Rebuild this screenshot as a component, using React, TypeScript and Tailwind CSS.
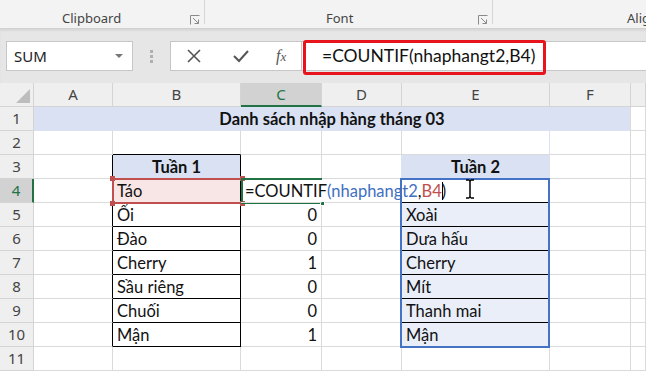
import React from "react";

const CELL_FONT = "font-['Lato','Liberation_Sans',sans-serif]";
const UI_FONT = "font-['Noto_Sans','Liberation_Sans',sans-serif]";

const GRID = "grid grid-cols-[34px_79px_128px_81px_80px_148px_81px_1fr]";

function Launcher() {
  return (
    <svg width="10" height="10" viewBox="0 0 10 10" className="text-[#8a8a8a]">
      <path d="M0.5 9.5V0.5H9.5" fill="none" stroke="currentColor" />
      <path d="M3 3L8.5 8.5M8.5 4.5V8.5H4.5" fill="none" stroke="currentColor" />
    </svg>
  );
}

function RowHead({ n, active }: { n: number; active?: boolean }) {
  return (
    <div
      className={`h-6 flex items-center justify-center border-b border-r border-[#d4d4d4] text-[15px] ${UI_FONT} ${
        active
          ? "bg-[#d2d2d2] text-[#217346] border-r-2 border-r-[#217346]"
          : "bg-[#efefef] text-[#444]"
      }`}
    >
      {n}
    </div>
  );
}

function Cell({
  children,
  className = "",
}: {
  children?: React.ReactNode;
  className?: string;
}) {
  return (
    <div
      className={`h-6 flex items-end pb-[1px] px-[4px] text-[16.5px] leading-5 text-[#111] border-b border-r border-[#dadada] whitespace-nowrap ${className}`}
    >
      {children}
    </div>
  );
}

function Handle({ className }: { className: string }) {
  return <div className={`absolute w-[5px] h-[5px] ${className}`} />;
}

export default function App() {
  const tuan1 = ["Ổi", "Đào", "Cherry", "Sầu riêng", "Chuối", "Mận"];
  const counts = ["0", "0", "1", "0", "0", "1"];
  const tuan2 = ["Xoài", "Dưa hấu", "Cherry", "Mít", "Thanh mai", "Mận"];

  return (
    <div className={`w-[646px] h-[373px] overflow-hidden bg-white ${CELL_FONT}`}>
      {/* ribbon group labels */}
      <div className={`h-[28px] bg-[#f3f3f3] flex text-[13px] text-[#444] ${UI_FONT}`}>
        <div className="w-[205px] shrink-0 flex items-start pt-[10px] border-r border-[#d6d6d6] mb-[4px]">
          <span className="ml-[62px] leading-4">Clipboard</span>
          <span className="ml-auto mr-[4px] mt-[5px]">
            <Launcher />
          </span>
        </div>
        <div className="w-[288px] shrink-0 flex items-start pt-[10px] border-r border-[#d6d6d6] mb-[4px]">
          <span className="ml-[121px] leading-4">Font</span>
          <span className="ml-auto mr-[4px] mt-[5px]">
            <Launcher />
          </span>
        </div>
        <div className="flex-1 min-w-0 overflow-hidden flex items-start pt-[10px]">
          <span className="ml-[134px] leading-4 whitespace-nowrap">Alignment</span>
        </div>
      </div>

      {/* formula bar */}
      <div className="h-[55px] bg-[#e6e6e6] border-t border-[#d0d0d0] flex items-start pt-[12px] shadow-[inset_0_2px_2px_rgba(0,0,0,0.06)]">
        <div className="ml-[6px] w-[127px] shrink-0 h-[30px] bg-white border border-[#c6c6c6] flex items-center">
          <span className={`ml-[7px] text-[15px] text-[#222] ${UI_FONT}`}>SUM</span>
          <svg width="8" height="5" viewBox="0 0 8 5" className="ml-auto mr-[9px]">
            <path d="M0 0H8L4 4Z" fill="#777" />
          </svg>
        </div>
        <div className="w-[37px] shrink-0 h-[30px] flex flex-col items-center justify-center gap-[2px]">
          <div className="w-[3px] h-[3px] bg-[#b0b0b0]" />
          <div className="w-[3px] h-[3px] bg-[#b0b0b0]" />
          <div className="w-[3px] h-[3px] bg-[#b0b0b0]" />
        </div>
        <div className="w-[131px] shrink-0 h-[30px] bg-white border border-[#c6c6c6] border-r-0 flex items-center">
          <svg width="14" height="14" viewBox="0 0 14 14" className="ml-[16px]">
            <path d="M1 1L13 13M13 1L1 13" stroke="#555" strokeWidth="1.6" />
          </svg>
          <svg width="16" height="14" viewBox="0 0 16 14" className="ml-[32px]">
            <path d="M1 7L6 12L15 2" fill="none" stroke="#555" strokeWidth="2" />
          </svg>
          <span className="ml-[27px] text-[16px] italic text-[#555] font-['Liberation_Serif',serif]">
            f<span className="text-[13px]">x</span>
          </span>
        </div>
        <div className="relative flex-1 h-[30px] bg-white border border-[#c6c6c6] border-r-0 flex items-center">
          <span className="ml-[20px] text-[17.5px] text-[#111]">=COUNTIF(nhaphangt2,B4)</span>
          <div className="absolute left-[1px] top-[-2px] w-[243px] h-[35px] border-[3px] border-[#e8141b] rounded-[3px]" />
        </div>
      </div>

      {/* sheet */}
      <div className="relative">
        <div className={GRID}>
          {/* column headers */}
          <div className="h-6 bg-[#efefef] border-b border-r border-[#d4d4d4] flex items-end justify-end p-[3px]">
            <svg width="14" height="14" viewBox="0 0 14 14">
              <path d="M14 0V14H0Z" fill="#bdbdbd" />
            </svg>
          </div>
          {["A", "B", "C", "D", "E", "F", ""].map((c) => (
            <div
              key={c || "g"}
              className={`h-6 flex items-center justify-center border-r border-[#d4d4d4] text-[15px] ${UI_FONT} ${
                c === "C"
                  ? "bg-[#d2d2d2] text-[#217346] border-b-2 border-b-[#217346]"
                  : "bg-[#efefef] text-[#444] border-b border-b-[#d4d4d4]"
              }`}
            >
              {c}
            </div>
          ))}

          {/* row 1 */}
          <RowHead n={1} />
          <Cell className="col-span-6 justify-center bg-[#d9e1f2] border-b-[#d9e1f2] font-bold">
            Danh sách nhập hàng tháng 03
          </Cell>
          <Cell />

          {/* row 2 */}
          <RowHead n={2} />
          <Cell />
          <Cell className="border-b-black" />
          <Cell />
          <Cell />
          <Cell className="border-r-[#d9e1f2]" />
          <Cell />
          <Cell />

          {/* row 3 */}
          <RowHead n={3} />
          <Cell className="border-r-black" />
          <Cell className="justify-center bg-[#d9e1f2] font-bold border-r-black border-b-black">
            Tuần 1
          </Cell>
          <Cell />
          <Cell className="border-r-[#d9e1f2]" />
          <Cell className="justify-center bg-[#d9e1f2] font-bold border-r-[#d9e1f2] border-b-[#d9e1f2]">
            Tuần 2
          </Cell>
          <Cell />
          <Cell />

          {/* row 4 */}
          <RowHead n={4} active />
          <Cell className="border-r-black" />
          <Cell className="bg-[#f8e5e5] border-r-black border-b-black">Táo</Cell>
          <Cell className="relative z-10 overflow-visible border-r-transparent">
            <span className="relative">
              =COUNTIF<span className="text-[#3f6fc0]">(nhaphangt2</span>,
              <span className="text-[#c0504d]">B4</span>)
            </span>
          </Cell>
          <Cell className="border-r-transparent" />
          <Cell className="bg-white border-b-black" />
          <Cell />
          <Cell />

          {/* rows 5-10 */}
          {tuan1.map((t, i) => (
            <React.Fragment key={t + i}>
              <RowHead n={i + 5} />
              <Cell className="border-r-black" />
              <Cell className="border-r-black border-b-black">{t}</Cell>
              <Cell className="justify-end">{counts[i]}</Cell>
              <Cell />
              <Cell className="bg-[#e9eef8] border-b-black">{tuan2[i]}</Cell>
              <Cell />
              <Cell />
            </React.Fragment>
          ))}

          {/* row 11 */}
          <RowHead n={11} />
          <Cell />
          <Cell />
          <Cell />
          <Cell />
          <Cell />
          <Cell />
          <Cell />
        </div>

        {/* B4 reference highlight */}
        <div className="absolute left-[112px] top-[95px] w-[131px] h-[26px] border-2 border-[#c0504d]">
          <Handle className="left-[-4px] top-[-4px] bg-[#c0504d]" />
          <Handle className="right-[-4px] top-[-4px] bg-[#c0504d]" />
          <Handle className="left-[-4px] bottom-[-4px] bg-[#c0504d]" />
          <Handle className="right-[-4px] bottom-[-4px] bg-[#c0504d]" />
        </div>

        {/* C4 active cell */}
        <div className="absolute left-[241px] top-[95px] w-[81px] h-[26px] border-2 border-[#217346] border-r-0 pointer-events-none">
          <Handle className="right-[-3px] bottom-[-4px] bg-[#217346] border border-white" />
        </div>

        {/* E4:E10 range highlight */}
        <div className="absolute left-[400px] top-[95px] w-[150px] h-[170px] border-2 border-[#4472c4]" />

        {/* text caret and mouse I-beam */}
        <div className="absolute left-[442px] top-[99px] w-[1px] h-[18px] bg-black" />
        <svg
          className="absolute left-[465px] top-[96px]"
          width="10"
          height="20"
          viewBox="0 0 10 20"
        >
          <path d="M1 1H4M6 1H9M5 2V18M1 19H4M6 19H9M4 1.5H6M4 18.5H6" stroke="black" strokeWidth="1.5" fill="none" />
        </svg>
      </div>
    </div>
  );
}
